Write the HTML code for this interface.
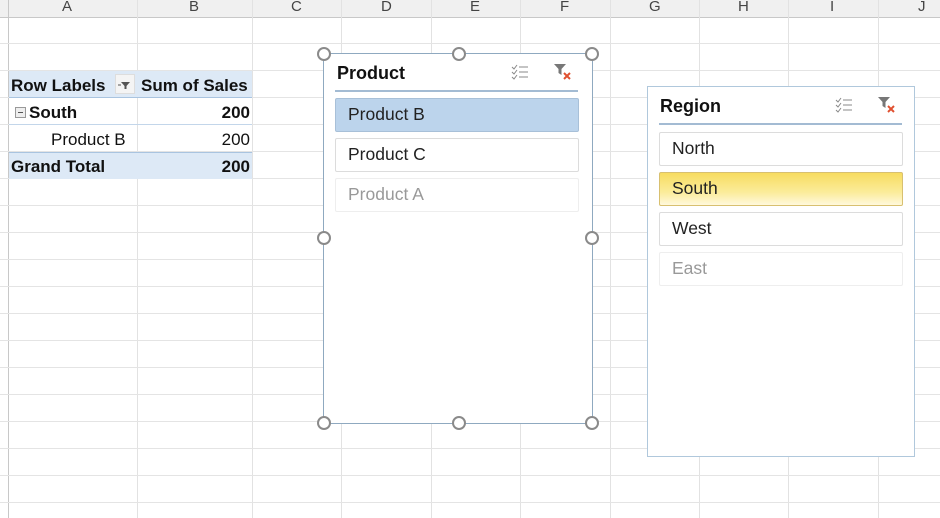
<!DOCTYPE html>
<html><head><style>
body{margin:0;width:940px;height:518px;overflow:hidden;background:#fff;font-family:"Liberation Sans",sans-serif;position:relative}
.a{position:absolute}
.hdr{left:0;top:0;width:940px;height:17px;background:#f0f0f0;border-bottom:1px solid #c8c8c8}
.ch{position:absolute;top:-2px;font-size:15px;color:#444;text-align:center}
.vl{position:absolute;top:0;width:1px;height:518px;background:#e2e2e2}
.hl{position:absolute;left:0;width:940px;height:1px;background:#e4e4e4}
.t{position:absolute;font-size:17px;color:#111;white-space:nowrap}
.b{font-weight:bold}
.sl{position:absolute;background:#fff;border:1px solid #9ab8d2}
.it{position:absolute;border:1px solid #dcdcdc;border-radius:2px;font-size:17.5px;padding-left:12px;box-sizing:border-box;line-height:31px;color:#222;background:#fff}
.h{position:absolute;width:10px;height:10px;border:2px solid #8a8a8a;border-radius:50%;background:#fff}
</style></head><body>
<div class="a hdr"></div>
<div class="vl" style="left:137px"></div><div class="vl" style="left:252px"></div><div class="vl" style="left:341px"></div><div class="vl" style="left:431px"></div><div class="vl" style="left:520px"></div><div class="vl" style="left:610px"></div><div class="vl" style="left:699px"></div><div class="vl" style="left:788px"></div><div class="vl" style="left:878px"></div>
<div class="vl" style="left:8px;background:#c8c8c8"></div>
<div class="ch" style="left:62px">A</div><div class="ch" style="left:189px">B</div><div class="ch" style="left:291px">C</div><div class="ch" style="left:381px">D</div><div class="ch" style="left:470px">E</div><div class="ch" style="left:560px">F</div><div class="ch" style="left:649px">G</div><div class="ch" style="left:738px">H</div><div class="ch" style="left:830px">I</div><div class="ch" style="left:918px">J</div>
<div class="hl" style="top:43px"></div><div class="hl" style="top:70px"></div><div class="hl" style="top:97px"></div><div class="hl" style="top:124px"></div><div class="hl" style="top:151px"></div><div class="hl" style="top:178px"></div><div class="hl" style="top:205px"></div><div class="hl" style="top:232px"></div><div class="hl" style="top:259px"></div><div class="hl" style="top:286px"></div><div class="hl" style="top:313px"></div><div class="hl" style="top:340px"></div><div class="hl" style="top:367px"></div><div class="hl" style="top:394px"></div><div class="hl" style="top:421px"></div><div class="hl" style="top:448px"></div><div class="hl" style="top:475px"></div><div class="hl" style="top:502px"></div>
<!-- pivot -->
<div class="a" style="left:9px;top:71px;width:243px;height:26px;background:#dde9f6;border-bottom:1px solid #a9c4e0"></div>
<div class="a" style="left:9px;top:152px;width:243px;height:26px;background:#dde9f6;border-top:1px solid #a9c4e0"></div>
<div class="a" style="left:9px;top:124px;width:243px;height:1px;background:#c3d6ea"></div>
<div class="t b" style="left:11px;top:76px">Row Labels</div>
<div class="a" style="left:115px;top:74px;width:20px;height:20px;background:#f4f4f4;border:1px solid #ddd;box-sizing:border-box"><svg width="18" height="18"><path d="M5 7h9l-3.5 4v3h-2v-3z" fill="#555"/><path d="M2 10h3" stroke="#555"/></svg></div>
<div class="t b" style="left:141px;top:76px">Sum of Sales</div>
<div class="a" style="left:15px;top:107px;width:9px;height:9px;border:1px solid #999;background:#eee"><div class="a" style="left:2px;top:4px;width:5px;height:1px;background:#555"></div></div>
<div class="t b" style="left:29px;top:103px">South</div>
<div class="t b" style="right:690px;top:103px">200</div>
<div class="t" style="left:51px;top:130px">Product B</div>
<div class="t" style="right:690px;top:130px">200</div>
<div class="t b" style="left:11px;top:157px">Grand Total</div>
<div class="t b" style="right:690px;top:157px">200</div>
<!-- product slicer -->
<div class="sl" style="left:323px;top:53px;width:268px;height:369px;border-color:#8fa9c0"></div>
<div class="t b" style="left:337px;top:63px;font-size:18px">Product</div>
<svg class="a" style="left:510px;top:63px" width="20" height="18"><path d="M2 4l2 2 3-4M2 9l2 2 3-4M2 14l2 2 3-4" stroke="#888" fill="none"/><path d="M9 4h9M9 9h9M9 14h9" stroke="#888"/></svg>
<svg class="a" style="left:553px;top:62px" width="22" height="20"><path d="M1 2h12l-4.5 5v6l-3-2V7z" fill="#777"/><path d="M11 11l6 6M17 11l-6 6" stroke="#e05030" stroke-width="2"/></svg>
<div class="a" style="left:335px;top:90px;width:243px;height:2px;background:#a3bbd3"></div>
<div class="it" style="left:335px;top:98px;width:244px;height:34px;background:#bcd4ec;border-color:#a8c0d8">Product B</div>
<div class="it" style="left:335px;top:138px;width:244px;height:34px">Product C</div>
<div class="it" style="left:335px;top:178px;width:244px;height:34px;color:#999;border-color:#eee">Product A</div>
<div class="h" style="left:317px;top:47px"></div><div class="h" style="left:452px;top:47px"></div><div class="h" style="left:585px;top:47px"></div>
<div class="h" style="left:317px;top:231px"></div><div class="h" style="left:585px;top:231px"></div>
<div class="h" style="left:317px;top:416px"></div><div class="h" style="left:452px;top:416px"></div><div class="h" style="left:585px;top:416px"></div>
<!-- region slicer -->
<div class="sl" style="left:647px;top:86px;width:266px;height:369px;border-color:#b0c8dc"></div>
<div class="t b" style="left:660px;top:96px;font-size:18px">Region</div>
<svg class="a" style="left:834px;top:96px" width="20" height="18"><path d="M2 4l2 2 3-4M2 9l2 2 3-4M2 14l2 2 3-4" stroke="#888" fill="none"/><path d="M9 4h9M9 9h9M9 14h9" stroke="#888"/></svg>
<svg class="a" style="left:877px;top:95px" width="22" height="20"><path d="M1 2h12l-4.5 5v6l-3-2V7z" fill="#777"/><path d="M11 11l6 6M17 11l-6 6" stroke="#e05030" stroke-width="2"/></svg>
<div class="a" style="left:659px;top:123px;width:243px;height:2px;background:#a3bbd3"></div>
<div class="it" style="left:659px;top:132px;width:244px;height:34px">North</div>
<div class="it" style="left:659px;top:172px;width:244px;height:34px;background:linear-gradient(#f7dc60,#fbec9a 60%,#fff8dc);border-color:#d8c070">South</div>
<div class="it" style="left:659px;top:212px;width:244px;height:34px">West</div>
<div class="it" style="left:659px;top:252px;width:244px;height:34px;color:#999;border-color:#eee">East</div>
</body></html>
